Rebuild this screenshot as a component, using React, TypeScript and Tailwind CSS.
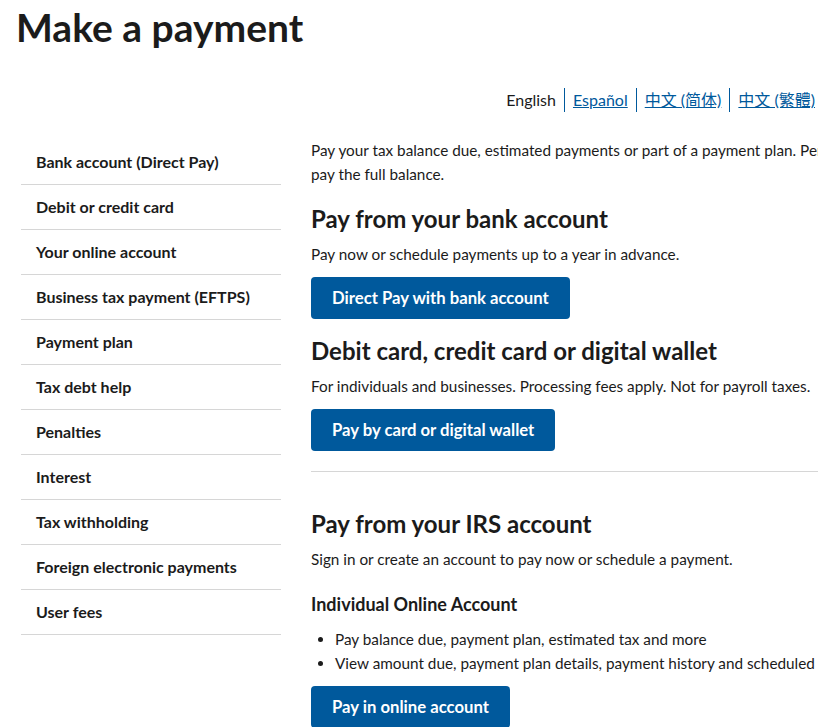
import React from 'react';

const sideLinks = [
  'Bank account (Direct Pay)',
  'Debit or credit card',
  'Your online account',
  'Business tax payment (EFTPS)',
  'Payment plan',
  'Tax debt help',
  'Penalties',
  'Interest',
  'Tax withholding',
  'Foreign electronic payments',
  'User fees',
];

const font = { fontFamily: 'Lato, "Noto Sans CJK SC", sans-serif' };

function LangBar() {
  return (
    <div className="flex justify-end pr-[3px] pt-[37px] text-[16px] leading-[24px]">
      <span className="pl-[9px] pr-[8px] text-[#1b1b1b]">English</span>
      <a href="#" className="border-l border-[#00599c] px-[8px] text-[#00599c] underline">Español</a>
      <a href="#" className="border-l border-[#00599c] px-[8px] text-[#00599c] underline">中文 (简体)</a>
      <a href="#" className="border-l border-[#00599c] pl-[8px] text-[#00599c] underline">中文 (繁體)</a>
    </div>
  );
}

function BlueButton({ children }: { children: React.ReactNode }) {
  return (
    <a href="#" className="inline-block rounded-[4px] bg-[#00599c] px-[21px] py-[9px] text-[16.7px] font-bold leading-[24px] text-white">
      {children}
    </a>
  );
}

export default function App() {
  return (
    <div className="h-[727px] w-[818px] overflow-hidden bg-white text-[#1b1b1b]" style={font}>
      <h1 className="pl-[16px] pt-[3px] text-[39px] font-bold leading-[48px]">Make a payment</h1>
      <LangBar />

      <div className="mt-[28px] flex">
        {/* menú lateral */}
        <nav className="ml-[21px] w-[260px] shrink-0">
          {sideLinks.map((t) => (
            <a
              key={t}
              href="#"
              className="block h-[45px] border-b border-[#d6d6d6] pl-[15px] pt-[10px] text-[16px] font-bold leading-[24px] text-[#1b1b1b]"
            >
              {t}
            </a>
          ))}
        </nav>

        {/* contenido */}
        <main className="-mt-[2px] ml-[30px] w-[720px] shrink-0 text-[15.3px] leading-[24px]">
          <p className="whitespace-nowrap">
            Pay your tax balance due, estimated payments or part of a payment plan. Penalties and interest may apply if you don't
            <br />
            pay the full balance.
          </p>

          <h2 className="mt-[18px] text-[24px] font-bold leading-[30px]">Pay from your bank account</h2>
          <p className="mt-[8px]">Pay now or schedule payments up to a year in advance.</p>
          <div className="mt-[11px]">
            <BlueButton>Direct Pay with bank account</BlueButton>
          </div>

          <h2 className="mt-[17px] text-[24px] font-bold leading-[30px]">Debit card, credit card or digital wallet</h2>
          <p className="mt-[8px]">For individuals and businesses. Processing fees apply. Not for payroll taxes.</p>
          <div className="mt-[11px]">
            <BlueButton>Pay by card or digital wallet</BlueButton>
          </div>

          <hr className="mt-[20px] border-[#d6d6d6]" />

          <h2 className="mt-[37px] text-[24px] font-bold leading-[30px]">Pay from your IRS account</h2>
          <p className="mt-[8px]">Sign in or create an account to pay now or schedule a payment.</p>

          <h3 className="mt-[20px] text-[18px] font-bold leading-[26px]">Individual Online Account</h3>
          <ul className="mt-[10px] list-disc whitespace-nowrap pl-[24px]">
            <li>Pay balance due, payment plan, estimated tax and more</li>
            <li>View amount due, payment plan details, payment history and scheduled payments</li>
          </ul>
          <div className="mt-[11px]">
            <BlueButton>Pay in online account</BlueButton>
          </div>
        </main>
      </div>
    </div>
  );
}
